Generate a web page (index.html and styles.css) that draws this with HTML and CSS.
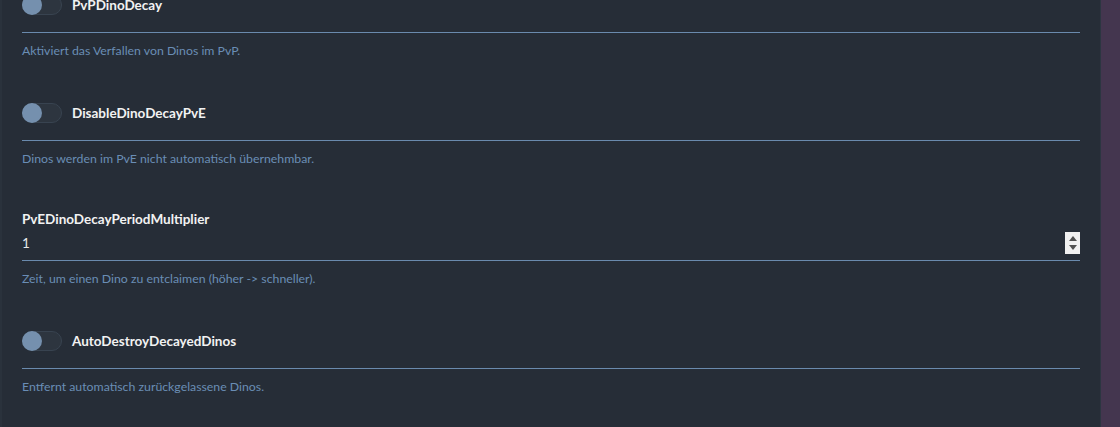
FILE: index.html
```html
<!DOCTYPE html>
<html lang="de">
<head>
  <meta charset="UTF-8" />
  <meta name="viewport" content="width=device-width, initial-scale=1" />
  <title>Dino Einstellungen</title>
  <link rel="stylesheet" href="styles.css">
</head>
<body>

  <div class="layout">
    <main class="panel">
      <div class="settings">

        <div class="field">
          <div class="field-row">
            <span class="switch"><span class="knob"></span></span>
            <label>PvPDinoDecay</label>
          </div>
          <p class="hint">Aktiviert das Verfallen von Dinos im PvP.</p>
        </div>

        <div class="field">
          <div class="field-row">
            <span class="switch"><span class="knob"></span></span>
            <label>DisableDinoDecayPvE</label>
          </div>
          <p class="hint">Dinos werden im PvE nicht automatisch übernehmbar.</p>
        </div>

        <div class="field">
          <label class="field-title">PvEDinoDecayPeriodMultiplier</label>
          <div class="field-row number">
            <span class="value">1</span>
            <span class="spinner"><i class="up"></i><i class="down"></i></span>
          </div>
          <p class="hint">Zeit, um einen Dino zu entclaimen (höher -&gt; schneller).</p>
        </div>

        <div class="field">
          <div class="field-row">
            <span class="switch"><span class="knob"></span></span>
            <label>AutoDestroyDecayedDinos</label>
          </div>
          <p class="hint">Entfernt automatisch zurückgelassene Dinos.</p>
        </div>

      </div>
    </main>
    <aside class="side"></aside>
  </div>

</body>
</html>
```

FILE: styles.css
```css
body { margin: 0; background: #262d37; font-family: "Lato", "Open Sans", sans-serif; overflow: hidden; }
.layout { display: flex; height: 427px; }
.panel {
  width: 1100px; background: #262d37;
  border-left: 2px solid #2a323c;
  box-sizing: border-box;
}
.side { flex: 1; background: #44364f; border-left: 1px solid #2c3641; }
.settings { padding: 0 20px 0 20px; margin-top: -5px; }

.field { margin-bottom: 44px; }
.field-row {
  display: flex; align-items: center;
  padding-bottom: 17px;
  border-bottom: 1px solid #6a8aad;
}
.field-row label { color: #f2f2f2; font-weight: bold; font-size: 13.5px; line-height: 12px; margin-left: 10px; }

.switch {
  width: 40px; height: 20px; box-sizing: border-box;
  background: #2d353f; border: 1px solid #384350;
  border-radius: 10px; position: relative;
}
.knob {
  position: absolute; left: -1px; top: -1px;
  width: 20px; height: 20px; border-radius: 50%;
  background: #7590ae;
}

.field-title { display: block; color: #f2f2f2; font-weight: bold; font-size: 13.5px; line-height: 17px; margin-bottom: 4px; }
.number { padding-bottom: 6px; justify-content: space-between; }
.value { color: #e6e8ea; font-size: 13.5px; }
.spinner {
  width: 15px; height: 22px; background: #f0f0f0;
  display: flex; flex-direction: column; align-items: center; justify-content: center; gap: 4px;
}
.spinner i { width: 0; height: 0; border-left: 4px solid transparent; border-right: 4px solid transparent; }
.spinner .up { border-bottom: 5px solid #505050; }
.spinner .down { border-top: 5px solid #505050; }

.hint { color: #6a8db5; font-size: 12.3px; margin: 10px 0 0 0; line-height: 16px; }
```
